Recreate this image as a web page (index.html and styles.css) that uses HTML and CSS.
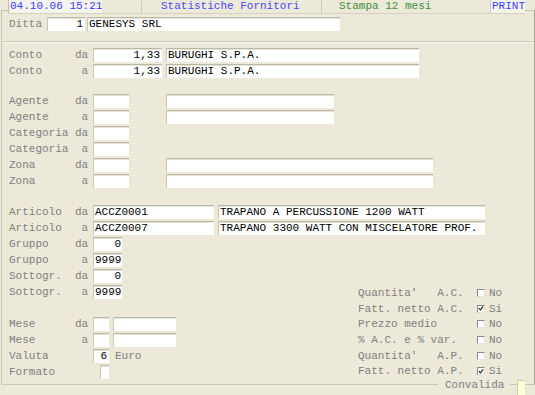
FILE: index.html
```html
<!DOCTYPE html>
<html>
<head>
<meta charset="utf-8">
<link rel="stylesheet" href="styles.css">
</head>
<body>
<div class="hdr">
  <div class="hdr-date">04.10.06 15:21</div>
  <div class="hdr-gap"></div>
  <div class="hdr-title">Statistiche Fornitori</div>
  <div class="hdr-mode">Stampa 12 mesi</div>
  <div class="hdr-print">PRINT</div>
</div>
<div class="frame">
  <div class="row row-ditta">
    <span class="lbl lbl-ditta">Ditta</span>
    <span class="f r w-ditta">1</span>
    <span class="f w-ditta-name">GENESYS SRL</span>
  </div>
  <div class="divider"></div>

  <div class="group g-conto">
    <div class="row">
      <span class="lbl">Conto     da</span>
      <span class="f r w-conto">1,33</span>
      <span class="f w-name m4">BURUGHI S.P.A.</span>
    </div>
    <div class="row">
      <span class="lbl">Conto      a</span>
      <span class="f r w-conto">1,33</span>
      <span class="f w-name m4">BURUGHI S.P.A.</span>
    </div>
  </div>

  <div class="group g-agente">
    <div class="row">
      <span class="lbl">Agente    da</span>
      <span class="f w-code"></span>
      <span class="f w-agname m37"></span>
    </div>
    <div class="row">
      <span class="lbl">Agente     a</span>
      <span class="f w-code"></span>
      <span class="f w-agname m37"></span>
    </div>
    <div class="row">
      <span class="lbl">Categoria da</span>
      <span class="f w-code"></span>
    </div>
    <div class="row">
      <span class="lbl">Categoria  a</span>
      <span class="f w-code"></span>
    </div>
    <div class="row">
      <span class="lbl">Zona      da</span>
      <span class="f w-code"></span>
      <span class="f w-zona m37"></span>
    </div>
    <div class="row">
      <span class="lbl">Zona       a</span>
      <span class="f w-code"></span>
      <span class="f w-zona m37"></span>
    </div>
  </div>

  <div class="group g-art">
    <div class="row">
      <span class="lbl">Articolo  da</span>
      <span class="f w-art">ACCZ0001</span>
      <span class="f w-desc m4">TRAPANO A PERCUSSIONE 1200 WATT</span>
    </div>
    <div class="row">
      <span class="lbl">Articolo   a</span>
      <span class="f w-art">ACCZ0007</span>
      <span class="f w-desc m4">TRAPANO 3300 WATT CON MISCELATORE PROF.</span>
    </div>
  </div>

  <div class="bottom">
    <div class="left">
      <div class="row">
        <span class="lbl">Gruppo    da</span>
        <span class="f r w-grp">0</span>
      </div>
      <div class="row">
        <span class="lbl">Gruppo     a</span>
        <span class="f r w-grp">9999</span>
      </div>
      <div class="row">
        <span class="lbl">Sottogr.  da</span>
        <span class="f r w-grp">0</span>
      </div>
      <div class="row">
        <span class="lbl">Sottogr.   a</span>
        <span class="f r w-grp">9999</span>
      </div>
      <div class="sp"></div>
      <div class="row">
        <span class="lbl">Mese      da</span>
        <span class="f w-mese"></span>
        <span class="f w-mese2"></span>
      </div>
      <div class="row">
        <span class="lbl">Mese       a</span>
        <span class="f w-mese"></span>
        <span class="f w-mese2"></span>
      </div>
      <div class="row">
        <span class="lbl">Valuta</span>
        <span class="f r w-mese">6</span>
        <span class="euro">Euro</span>
      </div>
      <div class="row">
        <span class="lbl">Formato</span>
        <span class="f w-fmt"></span>
      </div>
    </div>
    <div class="checks">
      <div class="ck"><span class="ckl">Quantita'   A.C.</span><span class="cb"></span><span>No</span></div>
      <div class="ck"><span class="ckl">Fatt. netto A.C.</span><span class="cb"><svg width="7" height="7" viewBox="0 0 7 7"><path d="M1 3 L2.8 5 L6 1" stroke="#222" stroke-width="1.4" fill="none"/></svg></span><span>Si</span></div>
      <div class="ck"><span class="ckl">Prezzo medio</span><span class="cb"></span><span>No</span></div>
      <div class="ck"><span class="ckl">% A.C. e % var.</span><span class="cb"></span><span>No</span></div>
      <div class="ck"><span class="ckl">Quantita'   A.P.</span><span class="cb"></span><span>No</span></div>
      <div class="ck"><span class="ckl">Fatt. netto A.P.</span><span class="cb"><svg width="7" height="7" viewBox="0 0 7 7"><path d="M1 3 L2.8 5 L6 1" stroke="#222" stroke-width="1.4" fill="none"/></svg></span><span>Si</span></div>
    </div>
  </div>

  <div class="convalida">
    <span class="conv-lbl">Convalida</span>
    <span class="conv-box"></span>
  </div>
</div>
</body>
</html>
```

FILE: styles.css
```css
html, body {
  margin: 0;
  height: 100%;
  overflow: hidden;
}
body {
  background: #ECE9D8;
  font: 11px/14px "Liberation Mono", "DejaVu Sans Mono", monospace;
  color: #808080;
}

/* header */
.hdr {
  position: relative;
  z-index: 1;
  display: flex;
  height: 13px;
  width: 517px;
  margin-left: 8px;
  border-bottom: 1px solid #d6d2c2;
  line-height: 13px;
  background: #ECE9D8;
}
.hdr > div { box-sizing: border-box; white-space: pre; }
.hdr-date {
  width: 94px;
  padding-left: 1px;
  background: #f4f3ee;
  border-left: 1px solid #c4c0b0;
  color: #3b3bff;
}
.hdr-gap {
  width: 40px;
  border-right: 1px solid #cfcbbb;
}
.hdr-title {
  width: 180px;
  padding-left: 19px;
  border-right: 1px solid #cfcbbb;
  color: #4848ff;
}
.hdr-mode {
  width: 168px;
  padding-left: 17px;
  color: #3d8f3d;
}
.hdr-print {
  width: 35px;
  padding-left: 1px;
  background: #f4f3ee;
  border-left: 1px solid #cfcbbb;
  color: #3b3bff;
}

/* frame */
.frame {
  position: relative;
  box-sizing: border-box;
  width: 534px;
  height: 375px;
  margin: -4px 0 0 1px;
  border: 1px solid #c9c5b5;
  border-right-color: #aaa696;
}

.row {
  display: flex;
  align-items: flex-start;
  height: 16px;
  padding-left: 7px;
}
.lbl {
  flex: none;
  width: 84px;
  white-space: pre;
}
.lbl-ditta { width: 38px; }
.row-ditta { margin-top: 6px; }

.f {
  flex: none;
  box-sizing: border-box;
  height: 14px;
  padding: 0 1px;
  background: #fff;
  border-top: 1px solid #bdb9a9;
  border-left: 1px solid #cbc7b8;
  box-shadow: inset 0 1px 0 #e6e3d8;
  color: #000;
  line-height: 13px;
  white-space: pre;
  overflow: hidden;
}
.r { text-align: right; padding-right: 2px; }

.w-ditta { width: 38px; }
.w-ditta-name { width: 253px; margin-left: 2px; }
.w-conto { width: 69px; }
.w-name { width: 253px; }
.w-code { width: 36px; }
.w-agname { width: 168px; }
.w-zona { width: 267px; }
.w-art { width: 121px; }
.w-desc { width: 267px; }
.w-grp { width: 29px; padding-right: 1px; }
.w-mese { width: 16px; }
.w-mese2 { width: 63px; margin-left: 4px; }
.w-fmt { width: 9px; margin-left: 7px; }
.m4 { margin-left: 4px; }
.m37 { margin-left: 37px; }
.euro { margin-left: 6px; line-height: 14px; }

.divider {
  margin-top: 8px;
  height: 0;
  border-top: 1px solid #cdc9b9;
  border-bottom: 1px solid #f7f6f0;
}
.g-conto { margin-top: 5px; }
.g-agente { margin-top: 14px; }
.g-art { margin-top: 15px; }

.bottom { display: flex; }
.left { width: 356px; flex: none; }
.sp { height: 16px; }
.checks {
  align-self: flex-end;
  margin-bottom: 2px;
}
.ck {
  display: flex;
  align-items: center;
  height: 15.6px;
}
.ckl {
  width: 119px;
  white-space: pre;
}
.cb {
  box-sizing: border-box;
  display: flex;
  align-items: center;
  justify-content: center;
  width: 8px;
  height: 8px;
  margin-right: 4px;
  background: #fff;
  border-top: 1px solid #8a8a8a;
  border-left: 1px solid #8a8a8a;
  border-right: 1px solid #e4e2d8;
  border-bottom: 1px solid #e4e2d8;
}
.cb svg { display: block; }

/* bottom legend over the frame border */
.convalida {
  position: absolute;
  left: 436px;
  top: 367px;
  display: flex;
  align-items: flex-start;
}
.conv-lbl {
  padding: 0 6px 0 7px;
  background: #ECE9D8;
  line-height: 14px;
}
.conv-box {
  box-sizing: border-box;
  width: 8px;
  height: 15px;
  margin: 2px 0 0 7px;
  background: #ffffd4;
  border-left: 1px solid #cfcbbb;
  border-top: 1px solid #cfcbbb;
}
```
